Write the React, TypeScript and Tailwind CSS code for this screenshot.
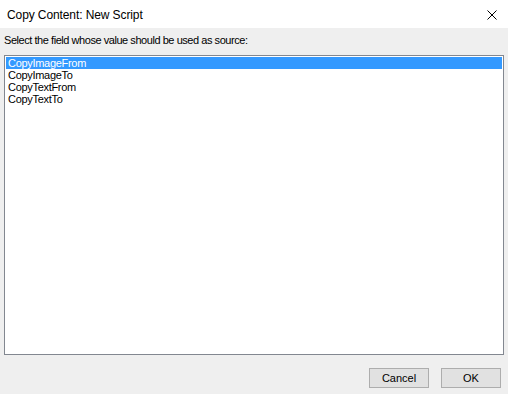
import { useState } from 'react';

const fields = ['CopyImageFrom', 'CopyImageTo', 'CopyTextFrom', 'CopyTextTo'];

export default function App() {
  const [selected, setSelected] = useState(0);

  return (
    <div className="w-[508px] h-[394px] flex flex-col bg-[#efefef] text-black" style={{ fontFamily: '"Liberation Sans", Arial, sans-serif' }}>
      {/* Title bar */}
      <div className="h-[28px] bg-white flex items-center justify-between pl-[7px] pr-[11px] shrink-0">
        <span className="text-[12px] leading-none pt-[1px] tracking-[-0.1px]">Copy Content: New Script</span>
        <svg width="10" height="10" viewBox="0 0 10 10" className="mt-[1px]">
          <path d="M0.5 0.5 L9.5 9.5 M9.5 0.5 L0.5 9.5" stroke="#000" strokeWidth="1" fill="none" />
        </svg>
      </div>

      {/* Body */}
      <div className="flex-1 flex flex-col px-[4px] pt-[6px]">
        <p className="text-[11px] leading-[13px] tracking-[-0.45px]">Select the field whose value should be used as source:</p>

        <div className="mt-[8px] h-[300px] border border-[#828790] bg-white p-[1px]">
          {fields.map((f, i) => (
            <div
              key={f}
              onClick={() => setSelected(i)}
              className={`h-[12px] text-[11px] leading-[12px] pl-[2px] tracking-[-0.3px] cursor-default ${i === selected ? 'bg-[#3399ff] text-white' : ''}`}
            >
              {f}
            </div>
          ))}
        </div>

        {/* Buttons */}
        <div className="flex justify-end gap-[12px] mt-[13px] pr-[3px]">
          <button className="w-[60px] h-[20px] bg-[#e1e1e1] border border-[#adadad] text-[11px] leading-none">Cancel</button>
          <button className="w-[60px] h-[20px] bg-[#e1e1e1] border border-[#adadad] text-[11px] leading-none">OK</button>
        </div>
      </div>
    </div>
  );
}
